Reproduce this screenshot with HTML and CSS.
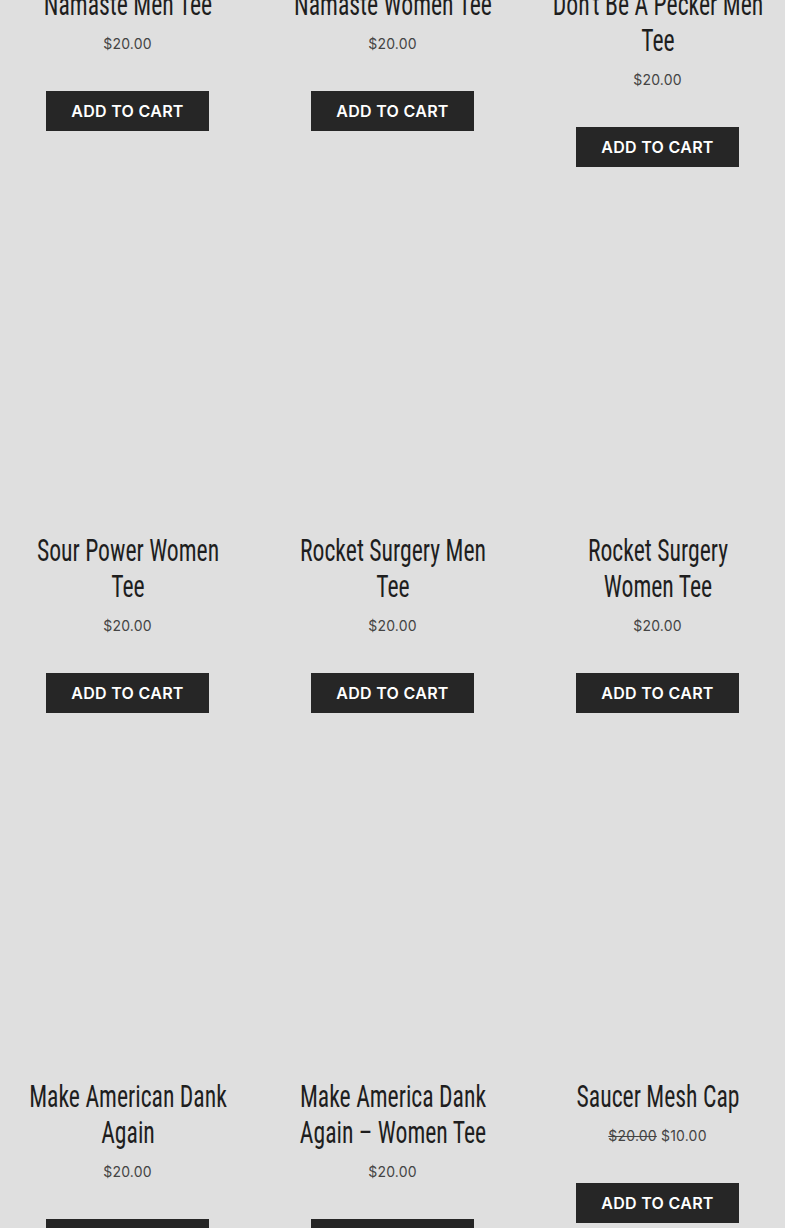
FILE: index.html
```html
<!DOCTYPE html>
<html lang="en">
<head>
    <meta charset="UTF-8">
    <meta name="viewport" content="width=device-width, initial-scale=1.0">
    <title>Shop</title>
    <link rel="stylesheet" href="styles.css">
</head>
<body>
    <div class="page">
        <ul class="products">
            <li class="product">
                <div class="thumb"></div>
                <h2 class="product-title">Namaste Men Tee</h2>
                <div class="price">$20.00</div>
                <a href="#" class="add-to-cart">Add to cart</a>
            </li>
            <li class="product">
                <div class="thumb"></div>
                <h2 class="product-title">Namaste Women Tee</h2>
                <div class="price">$20.00</div>
                <a href="#" class="add-to-cart">Add to cart</a>
            </li>
            <li class="product">
                <div class="thumb"></div>
                <h2 class="product-title">Don't Be A Pecker Men Tee</h2>
                <div class="price">$20.00</div>
                <a href="#" class="add-to-cart">Add to cart</a>
            </li>

            <li class="product">
                <div class="thumb"></div>
                <h2 class="product-title">Sour Power Women Tee</h2>
                <div class="price">$20.00</div>
                <a href="#" class="add-to-cart">Add to cart</a>
            </li>
            <li class="product">
                <div class="thumb"></div>
                <h2 class="product-title">Rocket Surgery Men Tee</h2>
                <div class="price">$20.00</div>
                <a href="#" class="add-to-cart">Add to cart</a>
            </li>
            <li class="product">
                <div class="thumb"></div>
                <h2 class="product-title">Rocket Surgery Women Tee</h2>
                <div class="price">$20.00</div>
                <a href="#" class="add-to-cart">Add to cart</a>
            </li>

            <li class="product">
                <div class="thumb"></div>
                <h2 class="product-title">Make American Dank Again</h2>
                <div class="price">$20.00</div>
                <a href="#" class="add-to-cart">Add to cart</a>
            </li>
            <li class="product">
                <div class="thumb"></div>
                <h2 class="product-title">Make America Dank Again &ndash; Women Tee</h2>
                <div class="price">$20.00</div>
                <a href="#" class="add-to-cart">Add to cart</a>
            </li>
            <li class="product">
                <div class="thumb"></div>
                <h2 class="product-title">Saucer Mesh Cap</h2>
                <div class="price"><del>$20.00</del> <ins>$10.00</ins></div>
                <a href="#" class="add-to-cart">Add to cart</a>
            </li>
        </ul>
    </div>
</body>
</html>
```
FILE: styles.css
```css
body {
    margin: 0;
    padding: 0;
    background-color: #dfdfdf;
    font-family: "Inter", "Liberation Sans", sans-serif;
    color: #222;
    overflow: hidden;
}

/* page is shown scrolled into the product list */
.page {
    margin-top: -289px;
}

.products {
    list-style: none;
    margin: 0;
    padding: 0;
    display: grid;
    grid-template-columns: repeat(3, 255px);
    column-gap: 10px;
    row-gap: 90px;
    align-items: start;
}

.product {
    text-align: center;
}

.thumb {
    height: 255px;
}

.product-title {
    margin: 20px -15.5px 0;
    font-family: "Roboto Condensed", "Liberation Sans Narrow", sans-serif;
    font-weight: 400;
    font-size: 32px;
    line-height: 36px;
    color: #1e1e1e;
    transform: scaleX(0.74);
}

.price {
    margin-top: 10px;
    font-size: 14px;
    line-height: 24px;
    letter-spacing: 0.2px;
    color: #444;
}

.price del {
    color: #444;
}

.price ins {
    text-decoration: none;
}

.add-to-cart {
    display: inline-block;
    margin-top: 35px;
    height: 40px;
    line-height: 40px;
    padding: 0 25px;
    background-color: #262626;
    color: #fff;
    font-weight: 600;
    font-size: 16px;
    letter-spacing: 0.3px;
    text-transform: uppercase;
    text-decoration: none;
}
```
